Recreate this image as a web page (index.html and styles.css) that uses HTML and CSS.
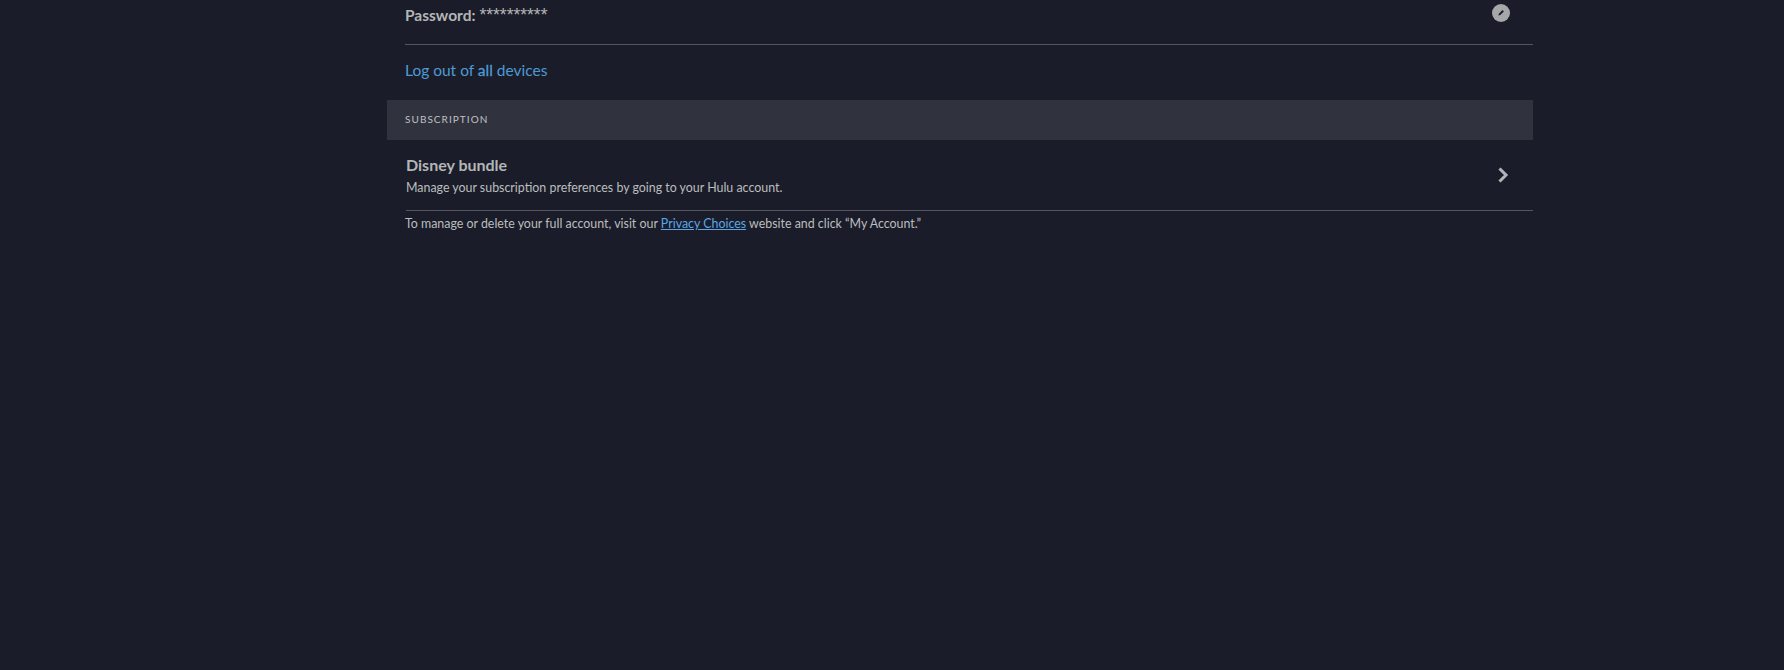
FILE: index.html
```html
<!DOCTYPE html>
<html lang="en">
<head>
<meta charset="utf-8">
<title>Account</title>
<link rel="stylesheet" href="styles.css">
</head>
<body>
<main class="account">
  <div class="credential">
    <p class="credential-text"><strong>Password:</strong> <span class="mask">**********</span></p>
    <button class="edit" aria-label="Edit password">
      <svg width="18" height="18" viewBox="0 0 18 18"><circle cx="9" cy="9" r="9" fill="#a6a7ab"/><path d="M6.400 11.600l.5-1.900 3.600-3.600 1.400 1.400-3.600 3.600z" fill="#1a1d29"/></svg>
    </button>
  </div>
  <a class="logout" href="#">Log out of <span class="all">all</span> devices</a>
  <h2 class="band">SUBSCRIPTION</h2>
  <div class="plan">
    <div>
      <h3 class="plan-name">Disney bundle</h3>
      <p class="plan-note">Manage your subscription preferences by going to your Hulu account.</p>
    </div>
    <svg class="chevron" width="12" height="16" viewBox="0 0 12 16"><path d="M2.500 1.500L9 8l-6.500 6.500" fill="none" stroke="#b4b5b8" stroke-width="3"/></svg>
  </div>
  <p class="footnote">To manage or delete your full account, visit our <a href="#">Privacy Choices</a> website and click “My Account.”</p>
</main>
</body>
</html>
```
FILE: styles.css
```css
* { box-sizing: border-box; }
html, body { margin: 0; height: 100%; }
body {
  background: #1a1d29;
  color: #cacaca;
  font-family: Lato, "Liberation Sans", sans-serif;
  overflow: hidden;
}
.account {
  width: 1146px;
  margin-left: 387px;
  display: flex;
  flex-direction: column;
}
.credential {
  height: 45px;
  margin-left: 18px;
  padding-right: 23px;
  border-bottom: 1px solid #54565f;
  display: flex;
  justify-content: space-between;
  align-items: flex-start;
}
.credential-text {
  margin: 4px 0 0;
  font-size: 15.500px;
  line-height: 22px;
  color: #b4b5b7;
}
.mask {
  font-family: "Liberation Sans", sans-serif;
  font-size: 17.500px;
  line-height: 16px;
}
.edit {
  margin-top: 4px;
  padding: 0;
  border: 0;
  background: none;
  height: 18px;
}
.logout {
  margin: 13px 0 0 18px;
  height: 42px;
  font-size: 15.500px;
  line-height: 24px;
  color: #4f9ad6;
  text-decoration: none;
}
.all { -webkit-text-stroke: 0.3px #4f9ad6; }
.band {
  margin: 0;
  height: 40px;
  padding-left: 18px;
  background: #30323e;
  color: #c0c1c4;
  font-size: 10px;
  font-weight: 400;
  letter-spacing: 1.050px;
  line-height: 39px;
}
.plan {
  height: 71px;
  margin-left: 19px;
  padding: 15px 24px 0 0;
  border-bottom: 1px solid #54565f;
  display: flex;
  justify-content: space-between;
}
.plan-name {
  margin: 0;
  font-size: 16px;
  font-weight: 700;
  line-height: 20px;
  color: #b4b5b7;
}
.plan-note {
  margin: 3px 0 0;
  font-size: 12.400px;
  line-height: 20px;
  color: #bcbdbf;
}
.chevron { margin-top: 12px; }
.footnote {
  margin: 3px 0 0 18px;
  font-size: 12.400px;
  line-height: 20px;
  color: #bcbdbf;
}
.footnote a { color: #5ba6e6; }
```
